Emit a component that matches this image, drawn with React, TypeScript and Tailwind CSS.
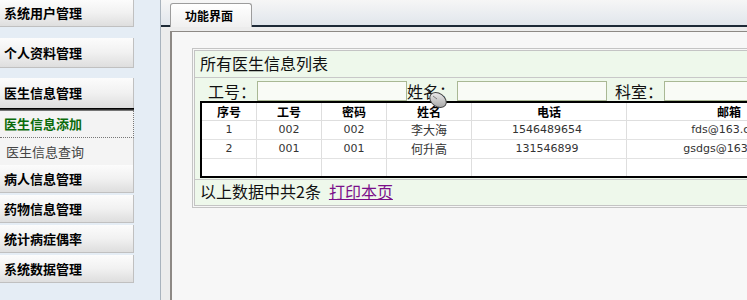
const menuBtn =
  'w-[134px] shrink-0 flex items-center pl-[4px] border-r border-b border-[#c0c0c0] bg-gradient-to-b from-[#fcfcfc] via-[#f1f1f1] to-[#dedede] text-[13px] font-bold text-black';

const MenuButton = ({ label, className }: { label: string; className: string }) => (
  <div className={`${menuBtn} ${className}`}>{label}</div>
);

const doctors = [
  { no: '1', id: '002', pwd: '002', name: '李大海', phone: '1546489654', mail: 'fds@163.com' },
  { no: '2', id: '001', pwd: '001', name: '何升高', phone: '131546899', mail: 'gsdgs@163.com' },
];

const cols = 'grid grid-cols-[55px_65px_65px_85px_155px_204px]';
const cell = 'flex items-center justify-center border-r border-[#dedede]';

const Sidebar = () => (
  <aside className="w-[160px] shrink-0 flex flex-col bg-[#e5edf5]">
    <MenuButton label="系统用户管理" className="h-[27px]" />
    <MenuButton label="个人资料管理" className="h-[30px] mt-[11px]" />
    <MenuButton label="医生信息管理" className="h-[30px] mt-[10px] border-b-0" />
    <div className="w-[134px] h-[3px] bg-gradient-to-b from-black via-[#333] to-[#999]" />
    <div className="w-[134px] h-[27px] flex items-center pl-[4px] bg-[#f3f3f3] border-r border-b border-dotted border-[#777] text-[13px] font-bold text-[#0b6b0b]">
      医生信息添加
    </div>
    <div className="w-[134px] h-[27px] flex items-center pl-[6px] bg-[#f4f4f4] border-r border-[#c0c0c0] text-[13px] text-[#444]">
      医生信息查询
    </div>
    <MenuButton label="病人信息管理" className="h-[28px]" />
    <MenuButton label="药物信息管理" className="h-[28px] mt-[2px]" />
    <MenuButton label="统计病症偶率" className="h-[28px] mt-[2px]" />
    <MenuButton label="系统数据管理" className="h-[28px] mt-[2px]" />
  </aside>
);

const SearchBox = () => <div className="w-[150px] h-[20px] shrink-0 border border-[#a9b894] bg-[#f9fbf6]" />;

const DoctorBox = () => (
  <div className="w-[650px] shrink-0 border border-[#c4c4c4] p-px">
    <div className="border border-[#c4c4c4] bg-[#eef8eb]">
      <div className="h-[27px] border-b border-[#c8c8c8] pl-[5px] pb-[3px] flex items-center text-[16px] text-[#111]">
        所有医生信息列表
      </div>

      <div className="px-[5px]">
        {/* search */}
        <div className="h-[23px] flex items-end text-[16px] text-[#111]">
          <div className="w-[57px] h-[23px] shrink-0 pl-[8px] pt-[4px] leading-[18px]">工号：</div>
          <SearchBox />
          <div className="w-[50px] h-[23px] shrink-0 pt-[4px] leading-[18px]">姓名：</div>
          <SearchBox />
          <div className="w-[57px] h-[23px] shrink-0 pl-[8px] pt-[4px] leading-[18px]">科室：</div>
          <SearchBox />
        </div>

        {/* table */}
        <div className="w-[633px] border-2 border-black bg-white">
          <div className={`${cols} h-[18px] border-b border-[#dedede] text-[12px] font-bold text-black`}>
            <div className={cell}>序号</div>
            <div className={cell}>工号</div>
            <div className={cell}>密码</div>
            <div className={cell}>姓名</div>
            <div className={cell}>电话</div>
            <div className={`${cell} border-r-0`}>邮箱</div>
          </div>
          {doctors.map((d) => (
            <div key={d.no} className={`${cols} h-[19px] border-b border-[#e2e2e2] text-[11px] text-[#333]`}>
              <div className={`${cell} font-['DejaVu_Sans',sans-serif]`}>{d.no}</div>
              <div className={`${cell} font-['DejaVu_Sans',sans-serif]`}>{d.id}</div>
              <div className={`${cell} font-['DejaVu_Sans',sans-serif]`}>{d.pwd}</div>
              <div className={`${cell} text-[12px]`}>{d.name}</div>
              <div className={`${cell} font-['DejaVu_Sans',sans-serif] pr-[4px]`}>{d.phone}</div>
              <div className={`${cell} border-r-0 font-['DejaVu_Sans',sans-serif]`}>{d.mail}</div>
            </div>
          ))}
          <div className={`${cols} h-[17px]`}>
            <div className={cell} />
            <div className={cell} />
            <div className={cell} />
            <div className={cell} />
            <div className={cell} />
            <div />
          </div>
        </div>
      </div>

      <div className="mt-[1px] h-[26px] border-t border-[#c8c8c8] pl-[5px] pb-[3px] flex items-center text-[16px] text-[#111]">
        以上数据中共2条
        <a href="#" className="ml-[8px] text-[#7b0f8a] underline">打印本页</a>
      </div>
    </div>
  </div>
);

const MouseCursor = () => (
  <svg className="absolute left-[424px] top-[86px]" width="26" height="24" viewBox="0 0 26 24">
    <defs>
      <linearGradient id="mg" x1="0" y1="0" x2="1" y2="1">
        <stop offset="0" stopColor="#fafafa" />
        <stop offset="1" stopColor="#9a9a9a" />
      </linearGradient>
    </defs>
    <path d="M2 3 C 5 5, 7 7, 8 9" stroke="#222" strokeWidth="1.3" fill="none" />
    <ellipse cx="14" cy="14" rx="9" ry="6.5" transform="rotate(35 14 14)" fill="url(#mg)" stroke="#444" strokeWidth="1" />
    <path d="M9 10 L 13 13" stroke="#666" strokeWidth="0.8" />
  </svg>
);

export default function App() {
  return (
    <div className="relative flex w-[747px] h-[300px] overflow-hidden font-['Noto_Sans_CJK_SC',sans-serif]">
      <Sidebar />

      <main className="flex-1 min-w-0 flex flex-col border-l border-[#a9b3bd]">
        <div className="h-[27px] shrink-0 flex items-end pl-[9px] border-b-2 border-[#1d2a37] bg-gradient-to-b from-[#f6f6f6] to-[#e1e6ec]">
          <div className="w-[82px] h-[24px] -mb-[2px] flex items-center pl-[14px] rounded-t-[3px] border border-b-0 border-[#9c9c9c] bg-gradient-to-b from-white to-[#f0f0f0] text-[12px] font-bold text-black">
            功能界面
          </div>
        </div>

        <div className="flex-1 pt-[4px] pl-[9px] bg-[#ececec]">
          <div className="h-full border-t border-l-2 border-[#8d8985] bg-[#f7f7f7] pt-[16px] pl-[20px]">
            <DoctorBox />
          </div>
        </div>
      </main>

      <MouseCursor />
    </div>
  );
}
